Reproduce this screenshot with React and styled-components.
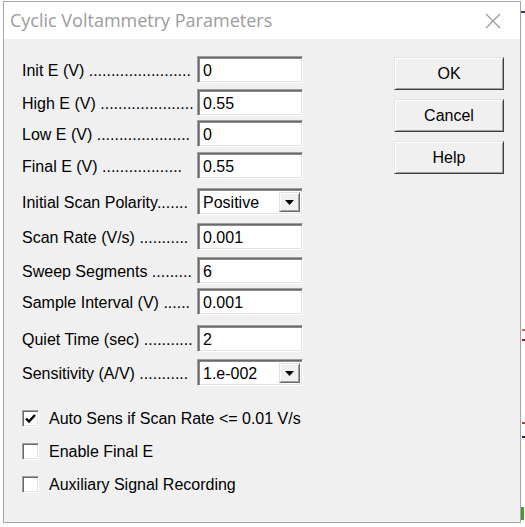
import React from 'react'
import styled, { createGlobalStyle } from 'styled-components'

const GlobalStyle = createGlobalStyle`
  html, body {
    margin: 0;
    padding: 0;
    background: #fff;
  }
  body {
    width: 525px;
    height: 527px;
    overflow: hidden;
  }
`

const fields = [
  { label: 'Init E (V) ' + '.'.repeat(23), value: '0', gap: 0 },
  { label: 'High E (V) ' + '.'.repeat(21), value: '0.55', gap: 6 },
  { label: 'Low E (V) ' + '.'.repeat(21), value: '0', gap: 4 },
  { label: 'Final E (V) ' + '.'.repeat(18), value: '0.55', gap: 5 },
  { label: 'Initial Scan Polarity' + '.'.repeat(7), value: 'Positive', gap: 9, select: true },
  { label: 'Scan Rate (V/s) ' + '.'.repeat(11), value: '0.001', gap: 8 },
  { label: 'Sweep Segments ' + '.'.repeat(9), value: '6', gap: 7 },
  { label: 'Sample Interval (V) ' + '.'.repeat(6), value: '0.001', gap: 4 },
  { label: 'Quiet Time (sec) ' + '.'.repeat(11), value: '2', gap: 10 },
  { label: 'Sensitivity (A/V) ' + '.'.repeat(11), value: '1.e-002', gap: 7, select: true },
]

const options = [
  { label: 'Auto Sens if Scan Rate <= 0.01 V/s', checked: true },
  { label: 'Enable Final E', checked: false },
  { label: 'Auxiliary Signal Recording', checked: false },
]

const App = () => {
  return (
    <Screen>
      <GlobalStyle />
      <Dialog>
        <TitleBar>
          <Title>Cyclic Voltammetry Parameters</Title>
          <CloseIcon width='16' height='16' viewBox='0 0 16 16'>
            <path d='M1 1 L15 15 M15 1 L1 15' stroke='#969696' strokeWidth='1.1' fill='none' />
          </CloseIcon>
        </TitleBar>

        <Body>
          <Form>
            {fields.map((f) => (
              <Row key={f.label} $gap={f.gap}>
                <Label>{f.label}</Label>
                {f.select ? (
                  <Select>
                    <SelectText>{f.value}</SelectText>
                    <ArrowButton>
                      <svg width='9' height='5' viewBox='0 0 9 5'>
                        <path d='M0 0 H9 L4.5 5 Z' fill='#000' />
                      </svg>
                    </ArrowButton>
                  </Select>
                ) : (
                  <Field>{f.value}</Field>
                )}
              </Row>
            ))}

            <Options>
              {options.map((o) => (
                <CheckRow key={o.label}>
                  <CheckBox>
                    {o.checked && (
                      <svg width='13' height='13' viewBox='0 0 13 13'>
                        <path d='M2 6.5 L5 9.5 L11 3' stroke='#000' strokeWidth='2.4' fill='none' />
                      </svg>
                    )}
                  </CheckBox>
                  <CheckLabel>{o.label}</CheckLabel>
                </CheckRow>
              ))}
            </Options>
          </Form>

          <Buttons>
            <Button>OK</Button>
            <Button>Cancel</Button>
            <Button>Help</Button>
          </Buttons>
        </Body>
      </Dialog>

      <ChartEdge width='4' height='527' viewBox='0 0 4 527'>
        <rect x='0' y='11' width='4' height='2' fill='#3a3f55' />
        <rect x='1' y='329' width='3' height='2' fill='#e06060' />
        <rect x='1' y='339' width='3' height='2' fill='#b02020' />
        <rect x='1' y='422' width='3' height='2' fill='#d03030' />
        <rect x='1' y='436' width='3' height='2' fill='#2a2a60' />
        <rect x='0' y='507' width='3' height='13' fill='#4a9a30' />
      </ChartEdge>
    </Screen>
  )
}

const Screen = styled.div`
  display: flex;
  align-items: flex-start;
  width: 525px;
  height: 527px;
  box-sizing: border-box;
  padding: 1px 0 0 3px;
  background: #fff;
`

const Dialog = styled.div`
  width: 518px;
  height: 522px;
  box-sizing: border-box;
  border: 1px solid #a6a6a6;
  background: #f0f0f0;
  display: flex;
  flex-direction: column;
`

const TitleBar = styled.div`
  height: 37px;
  flex-shrink: 0;
  background: #fff;
  display: flex;
  align-items: center;
  justify-content: space-between;
  padding: 0 19px 0 6px;
`

const Title = styled.span`
  font-family: 'Open Sans', 'Noto Sans', sans-serif;
  font-size: 18px;
  color: #9c9c9c;
  margin-top: -2px;
`

const CloseIcon = styled.svg`
  display: block;
  margin-top: 1px;
`

const Body = styled.div`
  display: flex;
  padding: 17px 0 0 18px;
`

const Form = styled.div`
  display: flex;
  flex-direction: column;
  width: 282px;
`

const Row = styled.div`
  display: flex;
  align-items: center;
  height: 27px;
  margin-top: ${(p) => p.$gap}px;
`

const Label = styled.span`
  width: 175px;
  flex-shrink: 0;
  white-space: nowrap;
  overflow: hidden;
  font-family: 'Liberation Sans', Arial, sans-serif;
  font-size: 16px;
  color: #000;
  padding-top: 2px;
`

const sunken = `
  box-sizing: border-box;
  height: 27px;
  width: 106px;
  background: #fff;
  border: 1px solid;
  border-color: #a0a0a0 #fff #fff #a0a0a0;
  box-shadow: inset 1px 1px 0 #696969, inset 2px 2px 0 #8a8a8a, inset -1px -1px 0 #e3e3e3;
`

const Field = styled.div`
  ${sunken}
  display: flex;
  align-items: center;
  padding: 2px 0 0 5px;
  font-family: 'Liberation Sans', Arial, sans-serif;
  font-size: 16px;
  color: #000;
`

const Select = styled.div`
  ${sunken}
  display: flex;
  align-items: stretch;
  padding: 3px 2px 2px 5px;
`

const SelectText = styled.span`
  flex: 1;
  display: flex;
  align-items: center;
  padding-top: 1px;
  font-family: 'Liberation Sans', Arial, sans-serif;
  font-size: 16px;
  color: #000;
`

const ArrowButton = styled.span`
  width: 21px;
  box-sizing: border-box;
  display: flex;
  align-items: center;
  justify-content: center;
  background: #f0f0f0;
  border: 1px solid;
  border-color: #e3e3e3 #696969 #696969 #e3e3e3;
  box-shadow: inset 1px 1px 0 #fff, inset -1px -1px 0 #a0a0a0;
`

const Options = styled.div`
  display: flex;
  flex-direction: column;
  gap: 16px;
  margin-top: 24px;
`

const CheckRow = styled.div`
  display: flex;
  align-items: center;
  gap: 10px;
  height: 17px;
`

const CheckBox = styled.span`
  width: 17px;
  height: 17px;
  box-sizing: border-box;
  display: flex;
  align-items: center;
  justify-content: center;
  background: #fff;
  border: 1px solid;
  border-color: #a0a0a0 #fff #fff #a0a0a0;
  box-shadow: inset 1px 1px 0 #696969, inset -1px -1px 0 #e3e3e3;
`

const CheckLabel = styled.span`
  font-family: 'Liberation Sans', Arial, sans-serif;
  font-size: 16px;
  color: #000;
  white-space: nowrap;
`

const Buttons = styled.div`
  display: flex;
  flex-direction: column;
  gap: 9px;
  margin: 1px 0 0 90px;
`

const Button = styled.button`
  width: 110px;
  height: 33px;
  box-sizing: border-box;
  padding: 0;
  background: #f0f0f0;
  border: 1px solid;
  border-color: #e3e3e3 #404040 #404040 #e3e3e3;
  box-shadow: inset 1px 1px 0 #fff, inset -1px -1px 0 #a0a0a0;
  font-family: 'Liberation Sans', Arial, sans-serif;
  font-size: 16px;
  color: #000;
`

const ChartEdge = styled.svg`
  display: block;
  margin-top: -1px;
  flex-shrink: 0;
`

export default App
